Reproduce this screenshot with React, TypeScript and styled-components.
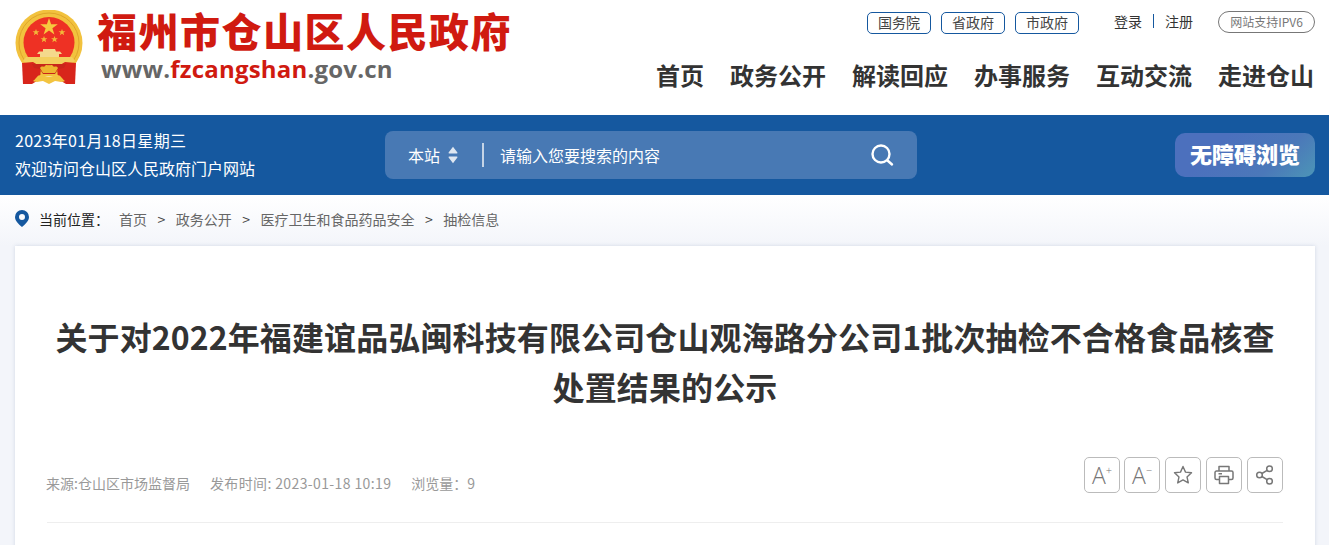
import * as React from "react";
import styled, { createGlobalStyle } from "styled-components";

const CJK = `"Noto Sans CJK SC", "Noto Sans", sans-serif`;

const GlobalStyle = createGlobalStyle`
  html, body {
    margin: 0;
    padding: 0;
    height: 545px;
    overflow: hidden;
    background: #fff;
    font-family: ${CJK};
  }
`;

const Page = styled.div`
  width: 1329px;
  height: 545px;
  overflow: hidden;
  background: linear-gradient(#fff 195px, #f3f5fa 246px);
`;

const Header = styled.header`
  height: 115px;
  display: flex;
  justify-content: space-between;
  padding: 0 14px 0 15px;
  box-sizing: border-box;
  background: #fff;
`;

const Brand = styled.div`
  display: flex;
  gap: 12px;
  padding-top: 10px;
`;

const BrandText = styled.div`
  display: flex;
  flex-direction: column;
  margin-top: -2px;
`;

const BrandName = styled.div`
  font-size: 40px;
  line-height: 44px;
  font-weight: 900;
  color: #d01a10;
  letter-spacing: 1.5px;
  white-space: nowrap;
`;

const BrandUrl = styled.div`
  margin-top: 1px;
  padding-left: 4px;
  font-family: "Open Sans", "Liberation Sans", sans-serif;
  font-size: 24px;
  line-height: 32px;
  font-weight: 700;
  letter-spacing: 0.2px;
  color: #666;
`;

const BrandUrlAccent = styled.span`
  color: #d01a10;
`;

const HeaderRight = styled.div`
  display: flex;
  flex-direction: column;
  align-items: flex-end;
`;

const TopLinks = styled.div`
  display: flex;
  align-items: center;
  height: 46px;
  box-sizing: border-box;
`;

const SiteLink = styled.a`
  width: 64px;
  height: 22px;
  box-sizing: border-box;
  border: 1px solid #15589f;
  border-radius: 5px;
  margin-left: 10px;
  font-size: 14px;
  line-height: 19px;
  text-align: center;
  color: #444;
`;

const AuthLinks = styled.div`
  display: flex;
  align-items: center;
  margin: 0 25px 4px 35px;
  font-size: 14px;
  color: #333;
`;

const AuthDivider = styled.span`
  width: 1px;
  height: 14px;
  margin: 0 11px;
  background: #15589f;
`;

const Ipv6Badge = styled.span`
  width: 97px;
  height: 22px;
  box-sizing: border-box;
  border: 1px solid #777;
  border-radius: 11px;
  margin-bottom: 2px;
  font-size: 12px;
  line-height: 20px;
  text-align: center;
  color: #777;
  white-space: nowrap;
`;

const MainNav = styled.nav`
  display: flex;
  gap: 26px;
  margin: 11px 1px 0 0;
`;

const NavItem = styled.a`
  font-size: 24px;
  line-height: 36px;
  font-weight: 700;
  color: #333;
  white-space: nowrap;
`;

const BlueBar = styled.div`
  height: 80px;
  background: #15589f;
  display: flex;
  align-items: center;
  padding: 0 14px 0 15px;
  color: #fff;
`;

const Welcome = styled.div`
  width: 370px;
  padding-bottom: 2px;
  font-size: 16px;
  line-height: 28px;
  white-space: nowrap;
`;

const DateLine = styled.div`
  letter-spacing: 0.3px;
`;

const SearchBox = styled.div`
  width: 532px;
  height: 48px;
  display: flex;
  align-items: center;
  border-radius: 8px;
  background: #4879b4;
  padding: 0 23px;
  box-sizing: border-box;
`;

const ScopeLabel = styled.span`
  font-size: 16px;
  margin-right: 8px;
`;

const SearchDivider = styled.span`
  width: 2px;
  height: 24px;
  margin: 0 16px 0 24px;
  background: #c5d4e6;
`;

const Placeholder = styled.span`
  flex: 1;
  font-size: 16px;
`;

const A11yButton = styled.div`
  width: 140px;
  height: 44px;
  margin-left: auto;
  border-radius: 10px;
  background: linear-gradient(135deg, #4c70bd 30%, #4b78b9 70%, #4c95b7);
  font-size: 22px;
  line-height: 40px;
  font-weight: 900;
  text-align: center;
  white-space: nowrap;
`;

const Crumbs = styled.div`
  height: 51px;
  display: flex;
  align-items: center;
  padding: 0 0 4px 15px;
  box-sizing: border-box;
  font-size: 14px;
  color: #666;
`;

const CrumbLabel = styled.span`
  margin: 0 10px 0 10px;
  color: #222;
`;

const CrumbSep = styled.span`
  margin: 0 10.500px;
  color: #444;
`;

const Card = styled.main`
  width: 1300px;
  height: 340px;
  margin-left: 15px;
  padding: 65px 32px 0;
  box-sizing: border-box;
  background: #fff;
  box-shadow: 0 0 4px rgba(30, 60, 120, 0.16);
`;

const Title = styled.h1`
  margin: 0;
  font-size: 32px;
  line-height: 50px;
  font-weight: 700;
  letter-spacing: 0.12px;
  color: #333;
  text-align: center;
`;

const MetaRow = styled.div`
  height: 66px;
  box-sizing: border-box;
  margin-top: 46px;
  display: flex;
  justify-content: space-between;
  border-bottom: 1px solid #eee;
`;

const MetaInfo = styled.div`
  display: flex;
  gap: 20px;
  margin-left: -1px;
  padding-top: 14px;
  font-size: 14px;
  line-height: 24px;
  color: #999;
`;

const PublishTime = styled.span`
  letter-spacing: 0.38px;
`;

const Tools = styled.div`
  display: flex;
  gap: 5px;
`;

const ToolButton = styled.span`
  width: 36px;
  height: 36px;
  box-sizing: border-box;
  border: 1px solid #bbb;
  border-radius: 5px;
  display: flex;
  align-items: center;
  justify-content: center;
  color: #777;

  &:first-child {
    margin-right: -1px;
  }
`;

const FontGlyph = styled.span`
  font-family: "Open Sans", sans-serif;
  font-size: 23px;
  line-height: 23px;
  font-weight: 300;
`;

const FontSign = styled.sup`
  font-size: 11px;
  line-height: 0;
  vertical-align: 10px;
`;

const Emblem = () => (
  <svg width="70" height="76" viewBox="0 0 70 76">
    <circle cx="34" cy="33" r="33.500" fill="#f2c23e" />
    <circle cx="34" cy="33" r="30" fill="none" stroke="#dfa52a" strokeWidth="1" />
    <circle cx="34" cy="32.500" r="25.500" fill="#ee3124" />
    <path d="M34 8l2.100 6.300h6.700l-5.400 3.900 2 6.300-5.400-3.900-5.400 3.900 2-6.300-5.400-3.900h6.700z" fill="#f6c93f" />
    <path d="M21 19l.9 2.300h2.500l-2 1.500.8 2.400-2.200-1.500-2.200 1.500.8-2.400-2-1.500h2.500zM47 19l.9 2.300h2.500l-2 1.500.8 2.400-2.200-1.500-2.200 1.500.8-2.400-2-1.500h2.500zM29 26l.9 2.300h2.500l-2 1.500.8 2.400-2.200-1.500-2.200 1.500.8-2.400-2-1.500h2.500zM39.500 26l.9 2.300h2.500l-2 1.500.8 2.400-2.200-1.500-2.200 1.500.8-2.400-2-1.500h2.500z" fill="#f2b93a" />
    <path d="M28 39h12l1 2.500h4l2 2.500h-3v3H25v-3h-3l2-2.500h4z" fill="#f4d98c" />
    <path d="M11 47h46l3 4-4 3H12l-4-3z" fill="#f3cf5e" />
    <path d="M7 53l11-1 8 5-1 12-8 5H8z" fill="#d8251b" />
    <path d="M61 53l-11-1-8 5 1 12 8 5h9z" fill="#d8251b" />
    <path d="M17 54h34l-2 4-6 1-3 5h-12l-3-5-6-1z" fill="#c9251a" />
    <path d="M25 58c2-3 4 0 5-2 1-2 2 0 4-1 2 1 3-1 4 1 1 2 3-1 5 2l-3 5H28z" fill="#eeb52f" />
    <path d="M18 71c4-3 4-6 8-6l8 2 8-2c4 0 4 3 8 6-5 2-6 0-10 0l-6 3-6-3c-4 0-5 2-10 0z" fill="#f3c440" />
  </svg>
);

const ScopeArrows = () => (
  <svg width="10" height="18" viewBox="0 0 10 18">
    <path d="M5 .8L9.400 6.400Q9.800 7.500 8.700 7.500H1.300Q.2 7.500 .6 6.400zM5 17.200L.6 11.600Q.2 10.500 1.300 10.500H8.700Q9.800 10.500 9.400 11.600z" fill="#dfe7f1" />
  </svg>
);

const SearchIcon = () => (
  <svg width="24" height="24" viewBox="0 0 24 24" fill="none" stroke="#fff" strokeWidth="2.400" strokeLinecap="round">
    <circle cx="11" cy="11" r="8.500" />
    <path d="M17.500 17.500L22 21.500" />
  </svg>
);

const PinIcon = () => (
  <svg width="14" height="17" viewBox="0 0 14 17">
    <path fillRule="evenodd" d="M7 0a7 7 0 0 1 7 7c0 4-4 7.500-7 10C4 14.500 0 11 0 7a7 7 0 0 1 7-7zm0 4a3 3 0 1 0 0 6 3 3 0 0 0 0-6z" fill="#15589f" />
  </svg>
);

const StarIcon = () => (
  <svg width="20" height="20" viewBox="0 0 20 20" fill="none" stroke="#777" strokeWidth="1.400" strokeLinejoin="round">
    <path d="M10 1.500l2.500 5.600 6 .7-4.500 4.100 1.300 6L10 14.900l-5.300 3 1.300-6L1.500 7.800l6-.7z" />
  </svg>
);

const PrintIcon = () => (
  <svg width="20" height="20" viewBox="0 0 20 20" fill="none" stroke="#777" strokeWidth="1.500" strokeLinejoin="round">
    <path d="M5 6V1.500h10V6" />
    <path d="M5 14.500H2.500a1.500 1.500 0 0 1-1.500-1.500V7.500A1.500 1.500 0 0 1 2.500 6h15A1.500 1.500 0 0 1 19 7.500V13a1.500 1.500 0 0 1-1.500 1.500H15" />
    <path d="M5.500 11.500h9v7h-9zM4.500 8.800h3.500" />
  </svg>
);

const ShareIcon = () => (
  <svg width="20" height="20" viewBox="0 0 20 20" fill="none" stroke="#777" strokeWidth="1.500">
    <circle cx="14.500" cy="3.800" r="2.800" />
    <circle cx="14.500" cy="16.200" r="2.800" />
    <circle cx="4.500" cy="10" r="2.800" />
    <path d="M6.900 8.500l5.200-3.200M6.900 11.500l5.200 3.200" />
  </svg>
);

const siteLinks = ["国务院", "省政府", "市政府"];
const navItems = ["首页", "政务公开", "解读回应", "办事服务", "互动交流", "走进仓山"];
const crumbs = ["首页", "政务公开", "医疗卫生和食品药品安全", "抽检信息"];

export default function App() {
  return (
    <Page>
      <GlobalStyle />
      <Header>
        <Brand>
          <Emblem />
          <BrandText>
            <BrandName>福州市仓山区人民政府</BrandName>
            <BrandUrl>
              www.<BrandUrlAccent>fzcangshan</BrandUrlAccent>.gov.cn
            </BrandUrl>
          </BrandText>
        </Brand>
        <HeaderRight>
          <TopLinks>
            {siteLinks.map(link => (
              <SiteLink key={link}>{link}</SiteLink>
            ))}
            <AuthLinks>
              登录
              <AuthDivider />
              注册
            </AuthLinks>
            <Ipv6Badge>网站支持IPV6</Ipv6Badge>
          </TopLinks>
          <MainNav>
            {navItems.map(item => (
              <NavItem key={item}>{item}</NavItem>
            ))}
          </MainNav>
        </HeaderRight>
      </Header>
      <BlueBar>
        <Welcome>
          <DateLine>2023年01月18日星期三</DateLine>
          欢迎访问仓山区人民政府门户网站
        </Welcome>
        <SearchBox>
          <ScopeLabel>本站</ScopeLabel>
          <ScopeArrows />
          <SearchDivider />
          <Placeholder>请输入您要搜索的内容</Placeholder>
          <SearchIcon />
        </SearchBox>
        <A11yButton>无障碍浏览</A11yButton>
      </BlueBar>
      <Crumbs>
        <PinIcon />
        <CrumbLabel>当前位置：</CrumbLabel>
        {crumbs.map((crumb, index) => (
          <React.Fragment key={crumb}>
            {index > 0 && <CrumbSep>&gt;</CrumbSep>}
            {crumb}
          </React.Fragment>
        ))}
      </Crumbs>
      <Card>
        <Title>
          关于对2022年福建谊品弘闽科技有限公司仓山观海路分公司1批次抽检不合格食品核查处置结果的公示
        </Title>
        <MetaRow>
          <MetaInfo>
            <span>来源:仓山区市场监督局</span>
            <PublishTime>发布时间: 2023-01-18 10:19</PublishTime>
            <span>浏览量：9</span>
          </MetaInfo>
          <Tools>
            <ToolButton>
              <FontGlyph>
                A<FontSign>+</FontSign>
              </FontGlyph>
            </ToolButton>
            <ToolButton>
              <FontGlyph>
                A<FontSign>−</FontSign>
              </FontGlyph>
            </ToolButton>
            <ToolButton>
              <StarIcon />
            </ToolButton>
            <ToolButton>
              <PrintIcon />
            </ToolButton>
            <ToolButton>
              <ShareIcon />
            </ToolButton>
          </Tools>
        </MetaRow>
      </Card>
    </Page>
  );
}
